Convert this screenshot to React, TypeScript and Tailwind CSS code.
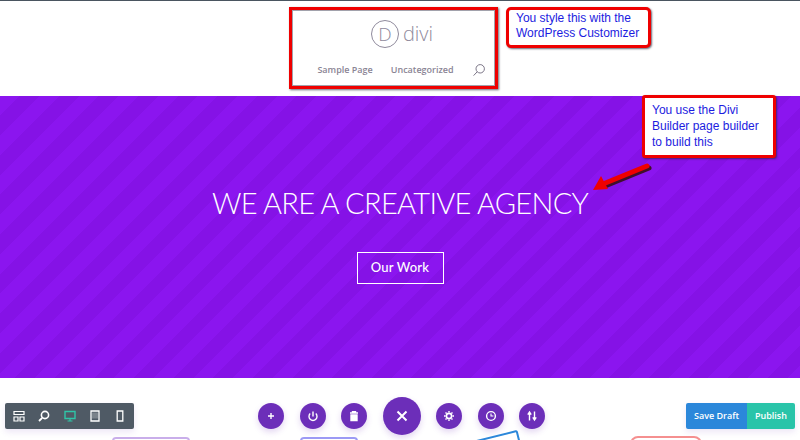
import { ReactNode } from "react";

function RoundButton({ children, large }: { children: ReactNode; large?: boolean }) {
  return (
    <div
      className={
        large
          ? "flex h-[38px] w-[38px] items-center justify-center rounded-full bg-[#6c2eb9] shadow-[0_3px_6px_rgba(108,46,185,0.2)]"
          : "flex h-[26px] w-[26px] items-center justify-center rounded-full bg-[#6c2eb9] shadow-[0_3px_6px_rgba(108,46,185,0.2)]"
      }
    >
      {children}
    </div>
  );
}

function ToolIcon({ children, className }: { children: ReactNode; className?: string }) {
  return (
    <svg width="12" height="12" viewBox="0 0 12 12" fill="none" stroke="currentColor" strokeWidth="1.2" className={className}>
      {children}
    </svg>
  );
}

function BarIcon({ children }: { children: ReactNode }) {
  return (
    <svg width="12" height="12" viewBox="0 0 12 12" fill="none" stroke="white" strokeWidth="1.4">
      {children}
    </svg>
  );
}

export default function App() {
  return (
    <main className="relative h-[440px] w-[800px] overflow-hidden bg-white font-['Open_Sans',sans-serif]">
      <header className="flex h-[96px] flex-col items-center border-t border-[#4a5560]">
        <div className="mt-[19px] ml-[4px] flex items-center gap-[4px]">
          <div className="flex h-[28px] w-[28px] items-center justify-center rounded-full border border-[#8f8a9c] text-[19px] leading-none font-light text-[#8f8a9c]">
            D
          </div>
          <span className="text-[20px] leading-none font-light text-[#8f8a9c]">divi</span>
        </div>
        <nav className="mt-[15px] ml-[3px] flex items-center text-[9px] font-semibold text-[#8a8494]">
          <span>Sample Page</span>
          <span className="ml-[18px]">Uncategorized</span>
          <svg width="14" height="14" viewBox="0 0 14 14" fill="none" stroke="#7a7486" strokeWidth="1" className="ml-[18px]">
            <circle cx="8.2" cy="5.8" r="4.2" />
            <path d="M5.2 8.8 1.6 12.6" />
          </svg>
        </nav>
      </header>

      <section className="flex h-[282px] flex-col items-center bg-[#8b15ef] bg-[repeating-linear-gradient(135deg,#8b15ef_0px,#8b15ef_14px,#8512e6_14px,#8512e6_28px)]">
        <h1 className="mt-[88px] text-[29px] leading-[38px] font-light tracking-[-0.7px] whitespace-nowrap text-white font-['Lato',sans-serif]">
          WE ARE A CREATIVE AGENCY
        </h1>
        <button
          type="button"
          className="mt-[30px] flex h-[32px] w-[87px] items-center justify-center border border-white text-[13px] font-medium tracking-[0.2px] text-white font-['Lato',sans-serif]"
        >
          Our Work
        </button>
      </section>

      <footer className="relative flex h-[62px] items-start justify-between px-[5px] pt-[25px]">
        <div className="flex h-[26px] w-[129px] items-center justify-between rounded-[2px] bg-[#4f5a65] px-[8px] text-white shadow-[0_3px_6px_rgba(108,46,185,0.12)]">
          <ToolIcon>
            <path d="M1 1.5h10v3H1z" />
            <path d="M1 7h4v4H1zM7 7h4v4H7z" />
          </ToolIcon>
          <ToolIcon>
            <circle cx="7" cy="5" r="3.6" strokeWidth="1.6" />
            <path d="M4.2 7.8 1 11" strokeWidth="1.8" />
          </ToolIcon>
          <ToolIcon className="text-[#2fc5a8]">
            <path d="M1 1.5h10v7H1z" strokeWidth="1.4" />
            <path d="M3.5 11h5M6 8.5V11" />
          </ToolIcon>
          <ToolIcon>
            <path d="M2 1h8v10H2z" strokeWidth="1.3" />
            <path d="M3 2.5h6v6H3z" fill="currentColor" fillOpacity="0.25" stroke="none" />
          </ToolIcon>
          <ToolIcon>
            <path d="M3.2 1h5.6v10H3.2z" strokeWidth="1.3" />
          </ToolIcon>
        </div>

        <div className="absolute top-[19px] left-[258px] flex items-center gap-[15.5px]">
          <RoundButton>
            <BarIcon>
              <path d="M6 3v6M3 6h6" />
            </BarIcon>
          </RoundButton>
          <RoundButton>
            <BarIcon>
              <path d="M6 1.5v5" />
              <path d="M3.2 3.6a4 4 0 1 0 5.6 0" />
            </BarIcon>
          </RoundButton>
          <RoundButton>
            <BarIcon>
              <path d="M2 3h8M4.5 3V1.6h3V3" />
              <path d="M3 5h6v5.5H3z" fill="white" />
            </BarIcon>
          </RoundButton>
          <RoundButton large>
            <svg width="14" height="14" viewBox="0 0 14 14" fill="none" stroke="white" strokeWidth="2">
              <path d="M2.5 2.5l9 9M11.5 2.5l-9 9" />
            </svg>
          </RoundButton>
          <RoundButton>
            <BarIcon>
              <circle cx="6" cy="6" r="2.6" strokeWidth="1.6" />
              <path d="M6 1v1.6M6 9.4V11M1 6h1.6M9.4 6H11M2.5 2.5l1.1 1.1M8.4 8.4l1.1 1.1M2.5 9.5l1.1-1.1M8.4 3.6l1.1-1.1" />
            </BarIcon>
          </RoundButton>
          <RoundButton>
            <BarIcon>
              <circle cx="6" cy="6" r="4.4" />
              <path d="M6 3.4V6h2.4" strokeWidth="1.1" />
            </BarIcon>
          </RoundButton>
          <RoundButton>
            <BarIcon>
              <path d="M3.5 10.5V3M1.8 4.6 3.5 2l1.7 2.6" />
              <path d="M8.5 1.5V9M6.8 7.4 8.5 10l1.7-2.6" />
            </BarIcon>
          </RoundButton>
        </div>

        <div className="flex h-[26px] overflow-hidden rounded-[2px] text-[9px] font-semibold text-white shadow-[0_3px_6px_rgba(108,46,185,0.12)]">
          <span className="flex w-[61px] items-center justify-center bg-[#2b87da]">Save Draft</span>
          <span className="flex w-[48px] items-center justify-center bg-[#29c4a9]">Publish</span>
        </div>

        <div className="absolute top-[59px] left-[112px] h-[20px] w-[78px] rounded-[4px] border-2 border-[#c9aeea]" />
        <div className="absolute top-[59px] left-[300px] h-[20px] w-[58px] rounded-[4px] border-2 border-[#9c9af5]" />
        <div className="absolute top-[57px] left-[475px] h-[24px] w-[46px] -rotate-[14deg] rounded-[2px] border-2 border-[#2b87da]" />
        <div className="absolute top-[58px] left-[630px] h-[20px] w-[72px] rounded-[8px] border-2 border-[#f59090]" />
      </footer>

      {/* screenshot annotations drawn over the page */}
      <div className="absolute top-[7px] left-[289px] h-[82px] w-[209px] border-[3px] border-[#ef0000] shadow-[1px_1px_2px_rgba(40,40,60,0.7),inset_0_0_0_1px_rgba(70,70,90,0.5)]" />
      <div className="absolute top-[7px] left-[506px] h-[41px] w-[145px] rounded-[5px] border-[3px] border-[#ef0000] bg-white pt-[1px] pl-[7px] font-['Liberation_Sans',sans-serif] text-[12px] leading-[15px] text-[#1c1ce0] shadow-[1px_1px_2px_rgba(40,40,60,0.7)]">
        You style this with the
        <br />
        WordPress Customizer
      </div>
      <div className="absolute top-[95px] left-[642px] h-[63px] w-[134px] rounded-[3px] border-[3px] border-[#ef0000] bg-white pt-[4px] pl-[7px] font-['Liberation_Sans',sans-serif] text-[12px] leading-[16px] text-[#1c1ce0] shadow-[1px_1px_2px_rgba(40,40,60,0.7)]">
        You use the Divi
        <br />
        Builder page builder
        <br />
        to build this
      </div>
      <svg width="64" height="40" viewBox="0 0 64 40" className="absolute top-[158px] left-[590px]">
        <path d="M58 9 14 27" stroke="#40102a" strokeWidth="5" strokeLinecap="round" transform="translate(1 1)" />
        <path d="M57 8 13 26" stroke="#ef0000" strokeWidth="5" strokeLinecap="round" />
        <path d="M3 32 11 18l7 13z" fill="#ef0000" />
      </svg>
    </main>
  );
}
